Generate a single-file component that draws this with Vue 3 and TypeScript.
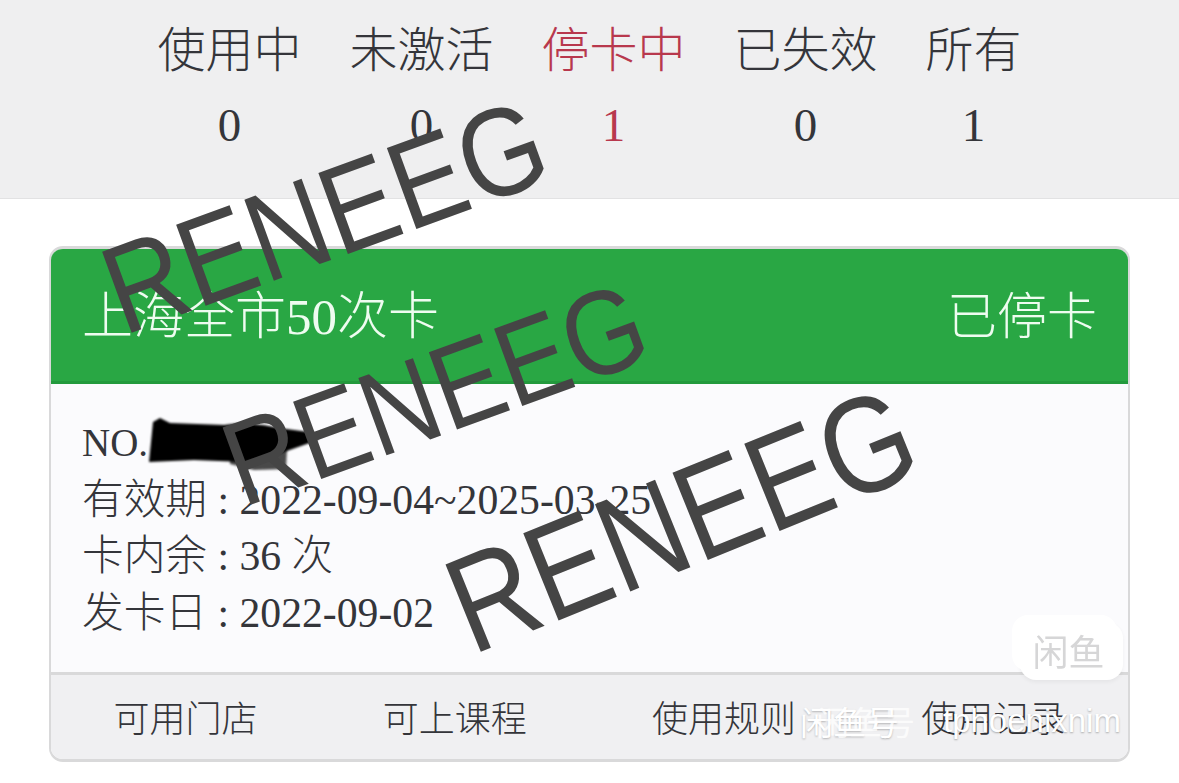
<script setup lang="ts">
interface Tab { label: string; count: number; active?: boolean }
const tabs: Tab[] = [
  { label: '使用中', count: 0 },
  { label: '未激活', count: 0 },
  { label: '停卡中', count: 1, active: true },
  { label: '已失效', count: 0 },
  { label: '所有', count: 1 },
]
const actions = ['可用门店', '可上课程', '使用规则', '使用记录']
const marks = ['mark-a', 'mark-b', 'mark-c']
</script>

<template>
  <div class="page">
    <nav class="tabs">
      <div v-for="t in tabs" :key="t.label" class="tab" :class="{ active: t.active }">
        <div class="tab-label">{{ t.label }}</div>
        <div class="tab-count">{{ t.count }}</div>
      </div>
    </nav>

    <section class="card">
      <header class="card-head">
        <span class="card-title">上海全市50次卡</span>
        <span class="card-status">已停卡</span>
      </header>
      <div class="card-body">
        <div class="line no">NO.</div>
        <div class="line">有效期 : 2022-09-04~2025-03-25</div>
        <div class="line">卡内余 : 36 次</div>
        <div class="line">发卡日 : 2022-09-02</div>
      </div>
      <footer class="card-foot">
        <span v-for="a in actions" :key="a" class="action">{{ a }}</span>
      </footer>
    </section>

    <svg class="redact" width="190" height="60" viewBox="0 0 190 60" aria-hidden="true">
      <defs>
        <filter id="soft"><feGaussianBlur stdDeviation="1.2" /></filter>
      </defs>
      <path filter="url(#soft)" fill="#4a4a4a" d="M96 38 L153 36 L152 57 L120 58 L96 52 Z" />
      <path filter="url(#soft)" fill="#000" d="M19 10 L26 6 L36 11 L90 13 Q118 9 145 16 L182 21 L184 28 L150 40 L132 45 L110 50 L60 48 L15 50 Z" />
    </svg>

    <span v-for="m in marks" :key="m" class="mark" :class="m">RENEEG</span>

    <div class="stamp">
      <span class="stamp-text">闲鱼</span>
    </div>
    <div class="seller">
      <span class="seller-cn">闲鱼号</span>
      <span class="seller-id">tphoenixnim</span>
    </div>
  </div>
</template>

<style>
html, body { margin: 0; background: #fff; }
</style>

<style scoped>
.page {
  position: relative;
  width: 1179px;
  height: 783px;
  overflow: hidden;
  background: #fff;
  font-family: "Liberation Serif", "Noto Sans CJK SC", serif;
  color: #34353a;
  font-weight: 300;
}
.tabs {
  box-sizing: border-box;
  height: 199px;
  padding-top: 21px;
  display: flex;
  justify-content: center;
  gap: 48px;
  background: #efeff0;
  border-bottom: 1px solid #e2e2e3;
}
.tab { text-align: center; }
.tab.active { color: #b8384d; }
.tab-label {
  font-size: 48px;
  line-height: 60px;
}
.tab-count {
  font-size: 47px;
  line-height: 54px;
  margin-top: 17px;
}
.card {
  box-sizing: border-box;
  margin: 47px 0 0 49px;
  width: 1081px;
  height: 516px;
  border: 3px solid #d9d9da;
  border-left-width: 2px;
  border-right-width: 2px;
  border-radius: 14px;
  overflow: hidden;
  display: flex;
  flex-direction: column;
}
.card-head {
  box-sizing: border-box;
  height: 135px;
  padding: 0 31px 6px 31px;
  display: flex;
  justify-content: space-between;
  align-items: center;
  background: #29a744;
  border-bottom: 3px solid #239a3d;
  color: #eefcf0;
}
.card-title { font-size: 51px; }
.card-status { font-size: 50px; }
.card-body {
  flex: 1;
  padding: 31px 31px 0;
  background: #fbfbfd;
  font-size: 41.7px;
  line-height: 56.5px;
}
.line { white-space: nowrap; }
.line.no { font-size: 39px; }
.card-foot {
  box-sizing: border-box;
  height: 87px;
  display: flex;
  align-items: center;
  background: #f0f0f2;
  border-top: 3px solid #d9d9da;
  padding-bottom: 3px;
}
.action {
  flex: 1;
  text-align: center;
  font-size: 36px;
}
.redact {
  position: absolute;
  left: 134px;
  top: 412px;
}
.mark {
  position: absolute;
  font-family: "Liberation Sans", sans-serif;
  font-weight: 400;
  line-height: 1;
  color: #454545;
  white-space: nowrap;
  transform-origin: 0 100%;
}
.mark-a {
  left: 130px;
  top: 245px;
  font-size: 109px;
  transform: rotate(-20deg) scaleY(1.15);
}
.mark-b {
  left: 249px;
  top: 421px;
  font-size: 104px;
  transform: rotate(-20deg) scaleY(1.15);
}
.mark-c {
  left: 480px;
  top: 559px;
  font-size: 116px;
  transform: rotate(-22deg) scaleY(1.18);
}
.stamp {
  position: absolute;
  left: 1020px;
  top: 622px;
  width: 103px;
  height: 58px;
  border-radius: 16px;
  background: #fff;
  box-shadow: 0 2px 4px rgba(0, 0, 0, 0.05);
  display: flex;
  align-items: center;
  justify-content: center;
}
.stamp::before {
  content: "";
  position: absolute;
  left: -8px;
  top: -7px;
  width: 105px;
  height: 56px;
  border-radius: 16px;
  background: #fff;
}
.stamp-text {
  position: relative;
  left: -3px;
  top: -1px;
  font-family: "Noto Sans CJK SC", sans-serif;
  font-weight: 400;
  font-size: 36px;
  color: #d6d6d7;
  line-height: 1;
  filter: blur(0.6px);
}
.seller {
  position: absolute;
  left: 800px;
  top: 697px;
  display: flex;
  align-items: center;
  color: #fff;
  font-family: "Liberation Sans", "Noto Sans CJK SC", sans-serif;
  font-weight: 400;
  white-space: nowrap;
}
.seller-cn {
  font-size: 33px;
  text-shadow: 16px 0 0 rgba(255, 255, 255, 0.75), 0 1px 2px rgba(0, 0, 0, 0.25);
}
.seller-id {
  font-size: 33px;
  margin-left: 44px;
  text-shadow: 0 1px 2px rgba(0, 0, 0, 0.3);
}
</style>
